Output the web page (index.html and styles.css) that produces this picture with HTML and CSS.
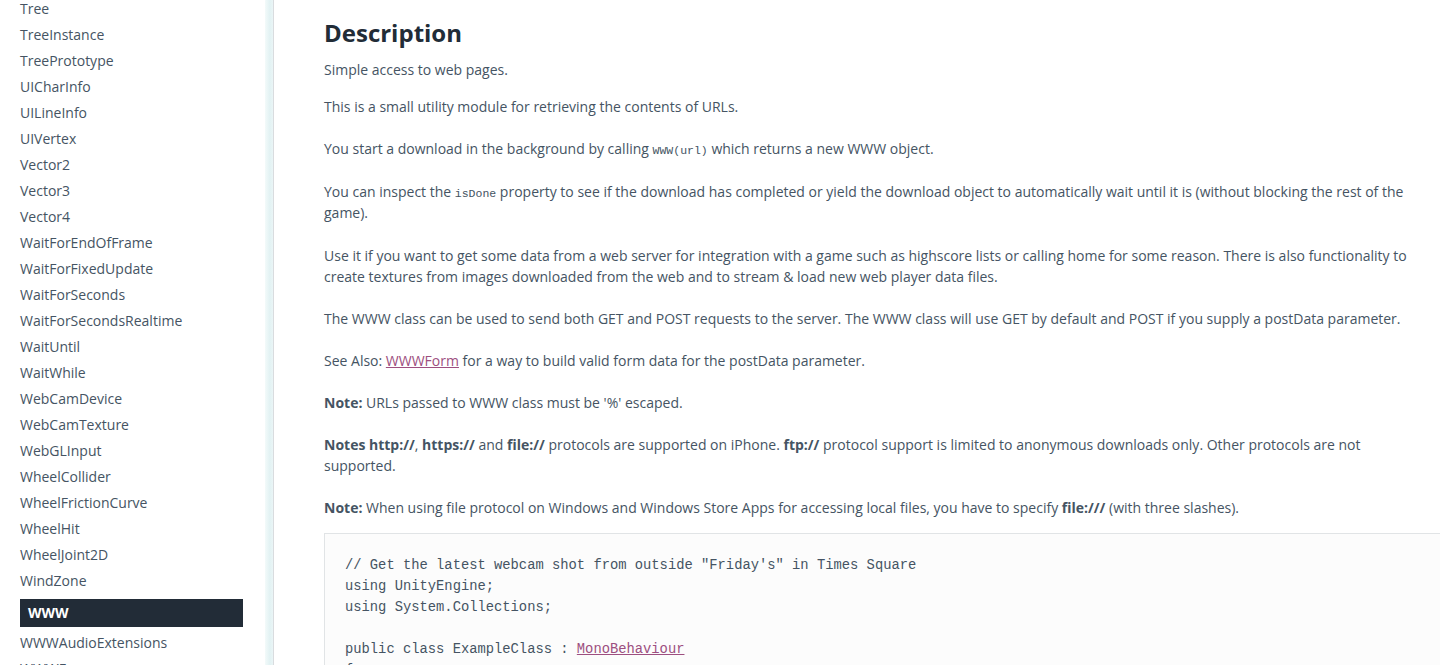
FILE: index.html
```
<!DOCTYPE html>
<html lang="en">
<head>
<meta charset="utf-8">
<title>WWW - Scripting API</title>
<link rel="stylesheet" href="styles.css">
</head>
<body>
<div class="layout">
  <nav class="sidebar">
    <ul class="toc">
      <li><a href="#">Tree</a></li>
      <li><a href="#">TreeInstance</a></li>
      <li><a href="#">TreePrototype</a></li>
      <li><a href="#">UICharInfo</a></li>
      <li><a href="#">UILineInfo</a></li>
      <li><a href="#">UIVertex</a></li>
      <li><a href="#">Vector2</a></li>
      <li><a href="#">Vector3</a></li>
      <li><a href="#">Vector4</a></li>
      <li><a href="#">WaitForEndOfFrame</a></li>
      <li><a href="#">WaitForFixedUpdate</a></li>
      <li><a href="#">WaitForSeconds</a></li>
      <li><a href="#">WaitForSecondsRealtime</a></li>
      <li><a href="#">WaitUntil</a></li>
      <li><a href="#">WaitWhile</a></li>
      <li><a href="#">WebCamDevice</a></li>
      <li><a href="#">WebCamTexture</a></li>
      <li><a href="#">WebGLInput</a></li>
      <li><a href="#">WheelCollider</a></li>
      <li><a href="#">WheelFrictionCurve</a></li>
      <li><a href="#">WheelHit</a></li>
      <li><a href="#">WheelJoint2D</a></li>
      <li><a href="#">WindZone</a></li>
      <li class="selected"><a href="#">WWW</a></li>
      <li><a href="#">WWWAudioExtensions</a></li>
      <li><a href="#">WWWForm</a></li>
    </ul>
  </nav>
  <div class="divider"></div>
  <main class="content">
    <h2 class="heading">Description</h2>
    <p class="summary">Simple access to web pages.</p>
    <p>This is a small utility module for retrieving the contents of URLs.</p>
    <p class="with-code">You start a download in the background by calling <code>WWW(url)</code> which returns a new WWW object.</p>
    <p class="with-code">You can inspect the <code>isDone</code> property to see if the download has completed or yield the download object to automatically wait until it is (without blocking the rest of the game).</p>
    <p>Use it if you want to get some data from a web server for integration with a game such as highscore lists or calling home for some reason. There is also functionality to create textures from images downloaded from the web and to stream &amp; load new web player data files.</p>
    <p>The WWW class can be used to send both GET and POST requests to the server. The WWW class will use GET by default and POST if you supply a postData parameter.</p>
    <p>See Also: <a class="link" href="#">WWWForm</a> for a way to build valid form data for the postData parameter.</p>
    <p><b>Note:</b> URLs passed to WWW class must be '%' escaped.</p>
    <p><b>Notes http://</b>, <b>https://</b> and <b>file://</b> protocols are supported on iPhone. <b>ftp://</b> protocol support is limited to anonymous downloads only. Other protocols are not supported.</p>
    <p class="last"><b>Note:</b> When using file protocol on Windows and Windows Store Apps for accessing local files, you have to specify <b>file:///</b> (with three slashes).</p>
    <pre class="codeblock">// Get the latest webcam shot from outside "Friday's" in Times Square
using UnityEngine;
using System.Collections;

public class ExampleClass : <a class="link" href="#">MonoBehaviour</a>
{
    public string url = "http://images.earthcam.com/ec_metros/ourcams/fridays.jpg";
}</pre>
  </main>
</div>
</body>
</html>
```
FILE: styles.css
```
html, body {
  margin: 0;
  padding: 0;
  height: 100%;
  overflow: hidden;
  background: #ffffff;
}

body {
  font-family: "Open Sans", "Liberation Sans", sans-serif;
  font-size: 14px;
  color: #455463;
}

.layout {
  display: flex;
  height: 665px;
  overflow: hidden;
}

.sidebar {
  width: 265px;
  flex: 0 0 265px;
  background: #ffffff;
  overflow: hidden;
}

.toc {
  list-style: none;
  margin: -4px 0 0 0;
  padding: 0 22px 0 20px;
}

.toc li {
  height: 26px;
  line-height: 26px;
}

.toc a {
  color: #455463;
  text-decoration: none;
  white-space: nowrap;
}

.toc li.selected {
  height: 28px;
  line-height: 28px;
  margin: 5px 0 3px 0;
  background: #222c37;
  padding-left: 8px;
}

.toc li.selected a {
  color: #ffffff;
  font-weight: 700;
}

.divider {
  flex: 0 0 8px;
  width: 8px;
  background: linear-gradient(to right, #f3fafa 0%, #e2f2f3 60%, #eaf5f6 100%);
  border-right: 1px solid #d9dcdf;
}

.content {
  flex: 1 1 auto;
  min-width: 0;
  padding: 0 20px 0 50px;
  line-height: 21px;
}

.heading {
  margin: 18px 0 11px 0;
  font-size: 24px;
  line-height: 30px;
  font-weight: 700;
  color: #222c37;
}

.content p {
  margin: 0 0 21px 0;
}

.content p.summary {
  margin-bottom: 16px;
}

.content p.with-code {
  margin-bottom: 22px;
}

.content p.last {
  margin-bottom: 15px;
}

.content b {
  font-weight: 700;
  color: #455463;
}

code {
  font-family: "Liberation Mono", "DejaVu Sans Mono", monospace;
  font-size: 11.5px;
  line-height: 1;
  color: #455463;
}

.link {
  color: #9d4f80;
  text-decoration: underline;
}

.codeblock {
  margin: 0 -40px 0 0;
  padding: 21px 20px 19px 20px;
  background: #fcfcfc;
  border: 1px solid #e1e4e6;
  font-family: "Liberation Mono", "DejaVu Sans Mono", monospace;
  font-size: 13.8px;
  line-height: 21px;
  color: #455463;
  white-space: pre;
  overflow: hidden;
}
```
